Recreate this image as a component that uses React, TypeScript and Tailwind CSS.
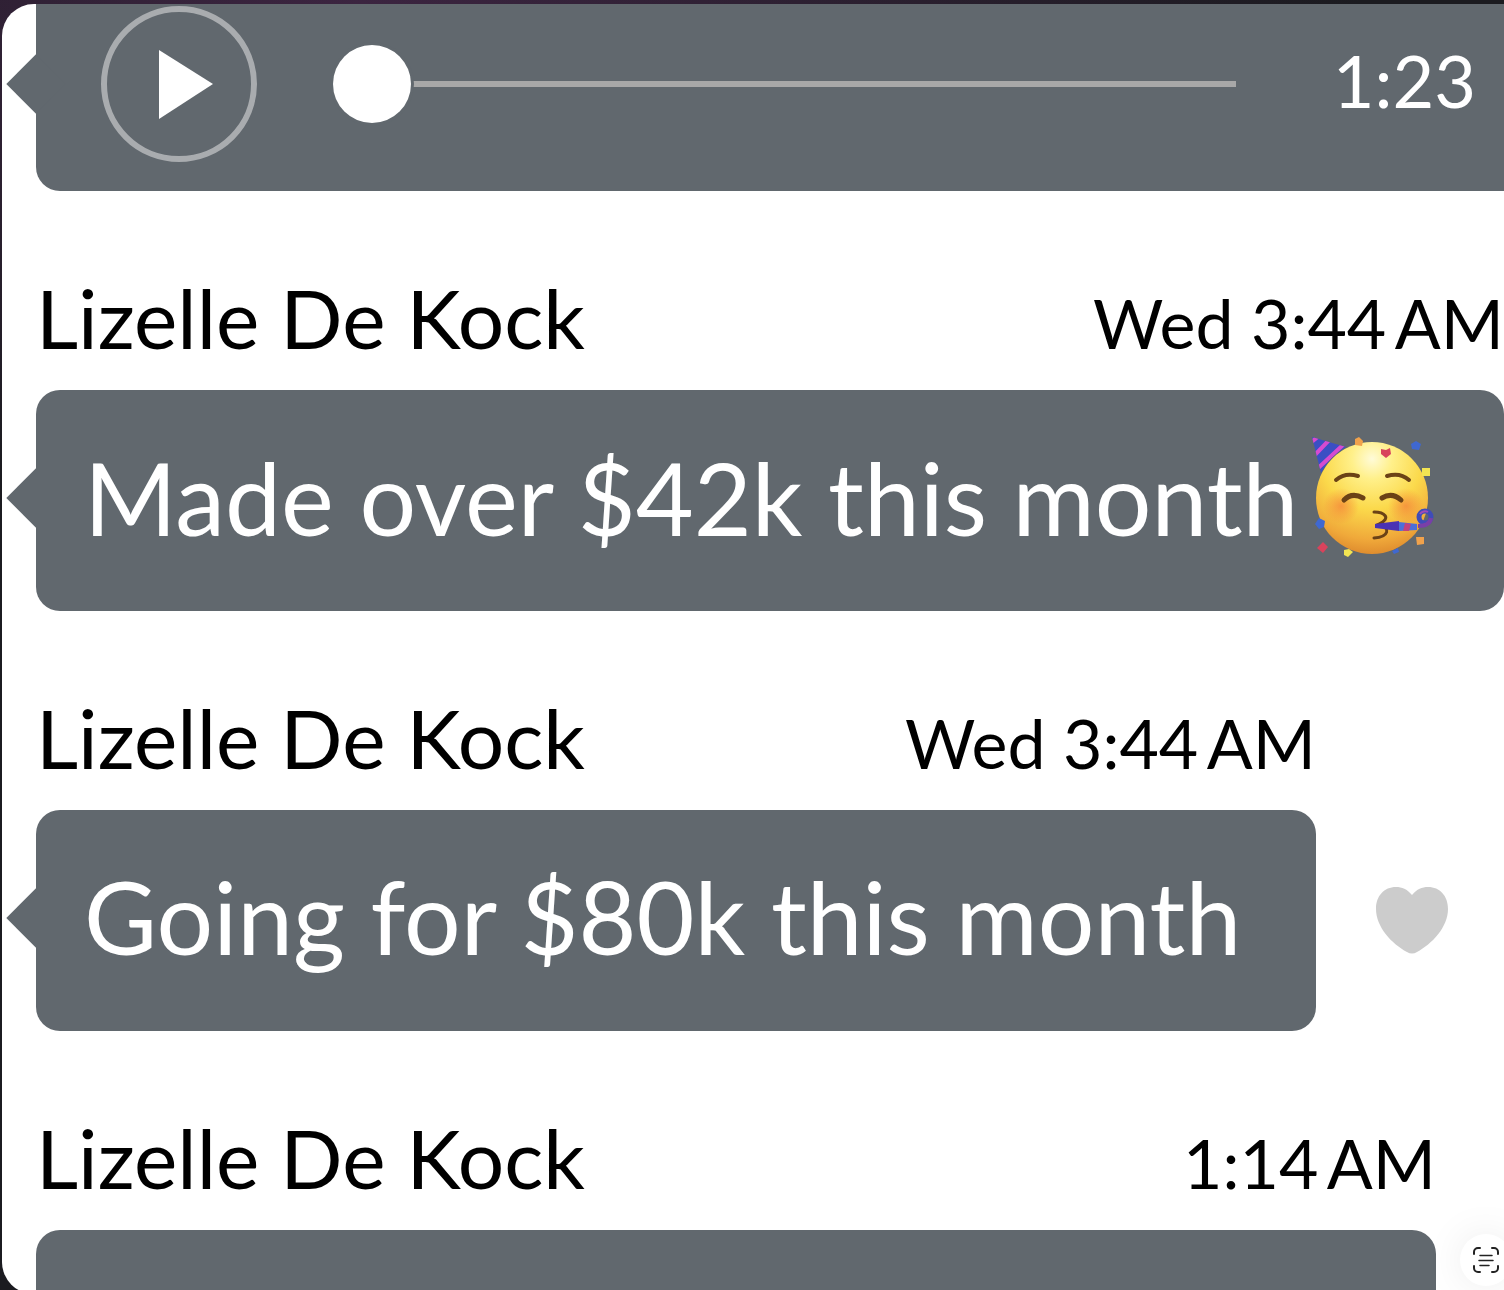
import type { ReactNode } from "react";

const PartyFace = () => (
  <svg viewBox="0 0 124 122" className="ml-3 h-[122px] w-[124px] shrink-0" role="img" aria-label="partying face">
    <defs>
      <radialGradient id="face" cx="0.5" cy="0.15" r="0.9">
        <stop offset="0" stopColor="#fffbd8" />
        <stop offset="0.2" stopColor="#fff08a" />
        <stop offset="0.5" stopColor="#fbd94b" />
        <stop offset="0.8" stopColor="#f0a93a" />
        <stop offset="1" stopColor="#d9822a" />
      </radialGradient>
      <radialGradient id="blush">
        <stop offset="0" stopColor="#f5853a" stopOpacity="0.75" />
        <stop offset="1" stopColor="#f5853a" stopOpacity="0" />
      </radialGradient>
      <clipPath id="hat">
        <path d="M2 1 36 11Q20 20 11 37Z" />
      </clipPath>
    </defs>
    <circle cx="62" cy="62" r="56" fill="url(#face)" />
    <circle cx="31" cy="70" r="18" fill="url(#blush)" />
    <circle cx="96" cy="70" r="18" fill="url(#blush)" />
    <g clipPath="url(#hat)">
      <path d="M0 0h40v40H0z" fill="#3b4fc4" />
      <path d="M-2 9 10-1M2 22 21 2M5 35 34 8" stroke="#d64bd0" strokeWidth="4" />
    </g>
    <g fill="none" stroke="#6b4216" strokeLinecap="round">
      <path d="M26 44Q35 36 48 40M77 40Q90 36 99 44" strokeWidth="4" />
      <path d="M34 64Q42 56 53 62M72 62Q82 56 91 64" strokeWidth="5" />
      <path d="M64 76C74 76 82 82 69 88C81 92 79 101 64 102" strokeWidth="3" />
    </g>
    <path d="M65 88 89 85v10L65 92Z" fill="#4a32b4" />
    <path d="M89 86 107 88v6L89 95Z" fill="#4d6fd8" />
    <path d="m95 87 6 1-2 7-6 0Z" fill="#c2417e" />
    <circle cx="115" cy="81" r="6" fill="none" stroke="#3f4cb8" strokeWidth="5" />
    <path d="M108 90Q120 90 121 82" fill="none" stroke="#7a3fa8" strokeWidth="4" />
    <path d="M110 78a6 6 0 0 1 8-2" fill="none" stroke="#a04bb8" strokeWidth="2" />
    <g fill="#3f68d0">
      <path d="m106 5 5 3-2 6-7-1-1-5Z" />
      <path d="m9 82 6 3-1 6-5 2-4-5Z" />
      <path d="m82 115 6-3 1 4-5 2Z" />
    </g>
    <g fill="#d8435c">
      <path d="m71 13 5 1 4-2 1 6-5 4-5-4Z" />
      <path d="m13 106 5 5-5 6-6-5Z" />
    </g>
    <g fill="#f3e552">
      <path d="M112 32h8v8h-8Z" />
      <path d="m34 114 5-1 4 3-5 5-4-2Z" />
    </g>
    <g fill="#f0a24c">
      <path d="m45 3 4-2 4 4-1 5-7-1Z" />
      <path d="M106 101h8v7l-7 1Z" />
    </g>
  </svg>
);

const HeartIcon = () => (
  <svg viewBox="0 0 72 67" className="h-[67px] w-[72px]" fill="#cccccc">
    <path d="M36 8C41 2 46 0 52 0C64 0 72 9 72 22C72 40 56 57 41 65Q36 68 31 65C16 57 0 40 0 22C0 9 8 0 20 0C26 0 31 2 36 8Z" />
  </svg>
);

const ScanIcon = () => (
  <svg viewBox="0 0 26 26" className="h-[26px] w-[26px]" fill="none" stroke="#222222" strokeLinecap="round">
    <path
      d="M1 7V5a4 4 0 0 1 4-4h2M19 1h2a4 4 0 0 1 4 4v2M25 19v2a4 4 0 0 1-4 4h-2M7 25H5a4 4 0 0 1-4-4v-2"
      strokeWidth="2"
    />
    <path d="M7 8.500h12M6 13.500h14M7 18.500h9" strokeWidth="1.500" />
  </svg>
);

const Tail = ({ className }: { className: string }) => (
  <span className={`absolute -left-[21px] h-[42px] w-[42px] rotate-45 bg-[#61686e] ${className}`} />
);

type MessageProps = {
  author: string;
  time: string;
  children?: ReactNode;
  aside?: ReactNode;
};

const Message = ({ author, time, children, aside }: MessageProps) => (
  <article className="flex items-end pt-[78px]">
    <div className="min-w-0 flex-1">
      <header className="flex h-[121px] items-baseline justify-between leading-[96px] whitespace-nowrap text-black">
        <h2 className="text-[82px]">{author}</h2>
        <time className="text-[68px]">{time}</time>
      </header>
      <div className="relative h-[221px] rounded-3xl bg-[#61686e] pt-[46px] pl-12">
        <Tail className="top-[87px]" />
        <p className="relative flex items-center text-[100px] leading-[121px] whitespace-nowrap text-white">
          {children}
        </p>
      </div>
    </div>
    {aside}
  </article>
);

export default function App() {
  return (
    <div className="relative h-screen overflow-hidden bg-[#1b1b20] font-['Lato',sans-serif]">
      <div className="h-full bg-[radial-gradient(ellipse_1000px_500px_at_360px_0,#3b2440,#1b1b20)] pt-1 pl-0.5">
        <main className="h-screen overflow-hidden rounded-l-[32px] bg-white pl-[34px]">
          <section className="relative flex items-center rounded-bl-3xl bg-[#61686e] pt-0.5 pr-7 pb-[29px] pl-16">
            <Tail className="top-[59px]" />
            <button type="button" aria-label="Play" className="shrink-0">
              <svg viewBox="0 0 158 156" className="h-[156px] w-[158px]">
                <circle cx="79" cy="78" r="75" fill="none" stroke="#a9acaf" strokeWidth="6" />
                <path d="M59 44 113 78 59 113Z" fill="#ffffff" />
              </svg>
            </button>
            <input
              type="range"
              aria-label="Position"
              min={0}
              max={83}
              defaultValue={0}
              className="ml-[75px] h-[78px] min-w-0 flex-1 appearance-none bg-transparent [&::-webkit-slider-runnable-track]:h-1.5 [&::-webkit-slider-runnable-track]:bg-[#a8a8a8] [&::-webkit-slider-thumb]:-mt-9 [&::-webkit-slider-thumb]:h-[78px] [&::-webkit-slider-thumb]:w-[78px] [&::-webkit-slider-thumb]:appearance-none [&::-webkit-slider-thumb]:rounded-full [&::-webkit-slider-thumb]:bg-white [&::-webkit-slider-thumb]:shadow-[0_0_0_3px_#61686e]"
            />
            <time className="w-60 shrink-0 pb-2 text-right text-[72px] leading-[96px] text-white">1:23</time>
          </section>

          <Message author="Lizelle De Kock" time={"Wed 3:44\u2009AM"}>
            Made over $42k this month
            <PartyFace />
          </Message>
          <Message
            author="Lizelle De Kock"
            time={"Wed 3:44\u2009AM"}
            aside={
              <div className="flex h-[221px] w-[188px] items-center justify-center pl-1">
                <button type="button" aria-label="Like">
                  <HeartIcon />
                </button>
              </div>
            }
          >
            Going for $80k this month
          </Message>
          <Message author="Lizelle De Kock" time={"1:14\u2009AM"} aside={<div className="w-17" />} />
        </main>
      </div>

      <button
        type="button"
        aria-label="Scan text"
        className="absolute -right-2 bottom-1 flex h-[52px] w-[52px] items-center justify-center rounded-full bg-white shadow-[0_0_40px_rgba(0,0,0,0.08)]"
      >
        <ScanIcon />
      </button>
    </div>
  );
}
